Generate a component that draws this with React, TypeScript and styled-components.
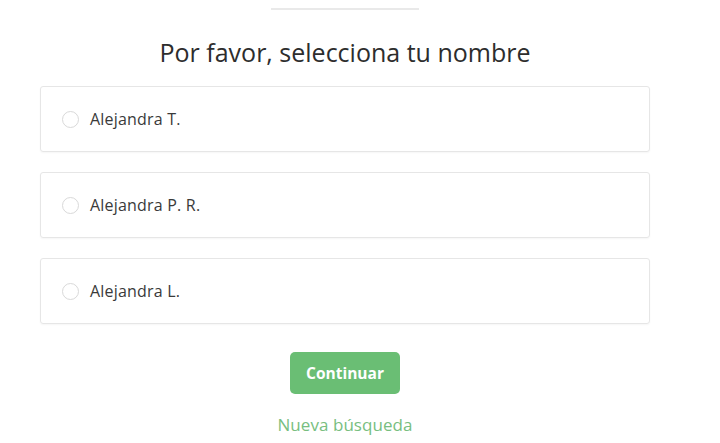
import styled, { createGlobalStyle } from "styled-components";

const GlobalStyle = createGlobalStyle`
  html, body {
    margin: 0;
    padding: 0;
    background: #ffffff;
  }
  body {
    font-family: "Open Sans", "Noto Sans", sans-serif;
    color: #2b2b2b;
  }
`;

const Page = styled.div`
  width: 690px;
  height: 443px;
  overflow: hidden;
  display: flex;
  flex-direction: column;
  align-items: center;
`;

const TopRule = styled.div`
  width: 148px;
  height: 2px;
  margin-top: 8px;
  background: #e9e9e9;
`;

const Title = styled.h1`
  margin: 26px 0 0;
  font-size: 25px;
  font-weight: 400;
  color: #2d2d2d;
  line-height: 32px;
`;

const OptionList = styled.div`
  width: 610px;
  margin-top: 18px;
  display: flex;
  flex-direction: column;
  gap: 20px;
`;

const OptionCard = styled.label`
  height: 64px;
  border: 1px solid #e6e6e6;
  border-radius: 3px;
  box-shadow: 0 1px 2px rgba(0, 0, 0, 0.04);
  display: flex;
  align-items: center;
  padding-left: 21px;
  gap: 11px;
  cursor: pointer;
`;

const Radio = styled.span`
  width: 17px;
  height: 17px;
  border-radius: 50%;
  border: 1px solid #d9d9d9;
  background: #fff;
  box-sizing: border-box;
`;

const OptionName = styled.span`
  font-size: 16px;
  letter-spacing: 0.2px;
  color: #3a3a3a;
`;

const ContinueButton = styled.button`
  margin-top: 28px;
  width: 110px;
  height: 42px;
  border: none;
  border-radius: 5px;
  background: #6abe74;
  color: #fff;
  font-family: inherit;
  font-size: 15.5px;
  font-weight: 700;
  cursor: pointer;
`;

const SearchLink = styled.a`
  margin-top: 19px;
  font-size: 17px;
  letter-spacing: 0.05px;
  color: #78be80;
  text-decoration: none;
`;

const names = ["Alejandra T.", "Alejandra P. R.", "Alejandra L."];

export default function App() {
  return (
    <Page>
      <GlobalStyle />
      <TopRule />
      <Title>Por favor, selecciona tu nombre</Title>
      <OptionList>
        {names.map((name) => (
          <OptionCard key={name}>
            <Radio />
            <OptionName>{name}</OptionName>
          </OptionCard>
        ))}
      </OptionList>
      <ContinueButton>Continuar</ContinueButton>
      <SearchLink href="#">Nueva búsqueda</SearchLink>
    </Page>
  );
}
